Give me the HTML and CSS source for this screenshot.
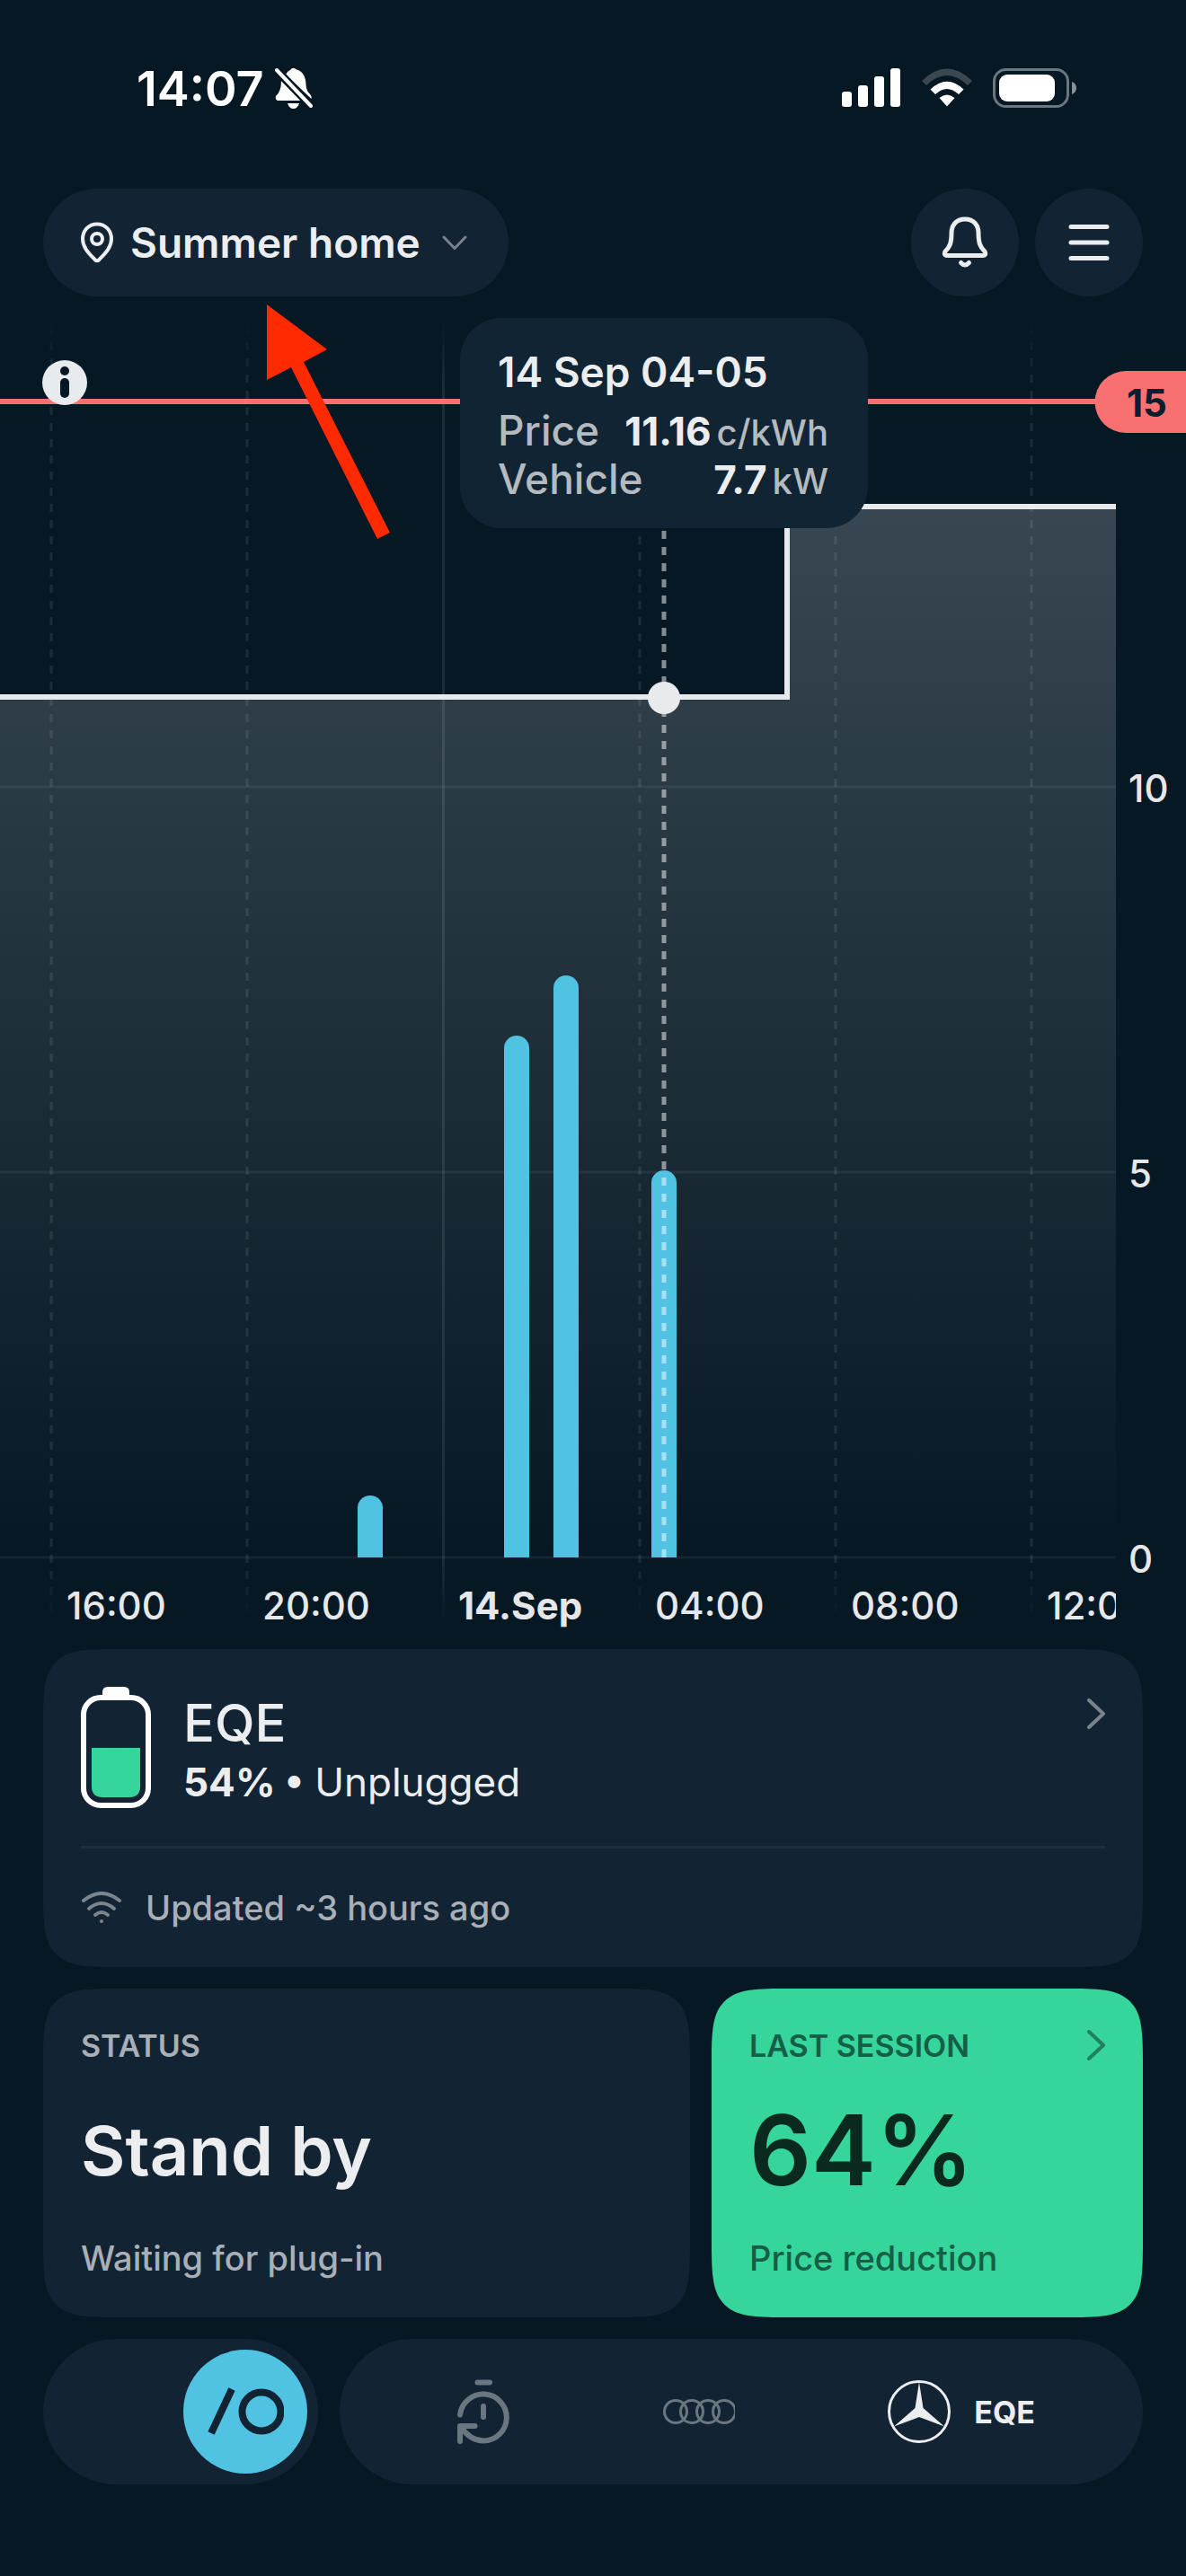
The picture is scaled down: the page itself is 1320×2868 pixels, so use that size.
FILE: index.html
```
<!DOCTYPE html>
<html lang="en">
<head>
  <meta charset="UTF-8" />
  <meta name="viewport" content="width=device-width, initial-scale=1" />
  <title>Summer home</title>
  <link rel="stylesheet" href="styles.css">
</head>
<body>

  <div class="status-bar">
    <div class="clock">
      <span>14:07</span>
      <svg width="42" height="48" viewBox="0 0 42 48" fill="#fff">
        <path d="M12 9 Q14 5 17 4 Q20 0 24 3.500 Q34 6 34.500 20 Q34.500 27 40 32 Q41 34 40.500 36 Z" />
        <path d="M7 16 L29 38 H3 Q0 37 1 33 Q7 28 7 16 Z" />
        <path d="M14 41 H27 Q25 47 20.500 47 Q16 47 14 41 Z" />
        <path d="M2 4 L40 44" stroke="#061824" stroke-width="9" />
        <path d="M2 4 L40 44" stroke="#fff" stroke-width="4" stroke-linecap="round" />
      </svg>
    </div>
    <div class="signals">
      <svg width="66" height="44" viewBox="0 0 66 44" fill="#fff">
        <rect x="0" y="26" width="11" height="17" rx="3" />
        <rect x="18" y="19" width="11" height="24" rx="3" />
        <rect x="36" y="9" width="11" height="34" rx="3" />
        <rect x="54" y="0" width="11" height="43" rx="3" />
      </svg>
      <svg width="58" height="44" viewBox="0 0 58 44" fill="#fff">
        <path d="M1 14 Q29 -13 57 14 L52 19 Q29 -3 6 19 Z" fill="#3b4852" />
        <path d="M10.500 23.500 Q29 6 47.500 23.500 L42 29 Q29 17 16 29 Z" />
        <path d="M20.500 33 Q29 26 37.500 33 L29 42.500 Z" />
      </svg>
      <svg width="93" height="44" viewBox="0 0 93 44">
        <rect x="1.500" y="1.500" width="82" height="41" rx="13" fill="none" stroke="#6c767e" stroke-width="3" />
        <rect x="7" y="7" width="62" height="30" rx="9" fill="#fff" />
        <path d="M88 15 Q93 17 93 22 Q93 27 88 29 Z" fill="#8a9299" />
      </svg>
    </div>
  </div>

  <header class="top-bar">
    <button class="location">
      <svg width="38" height="46" viewBox="0 0 38 46" fill="none" stroke="#ecedef" stroke-width="4" stroke-linejoin="round">
        <path d="M19 2.500 C10 2.500 3 9.500 3 19 C3 29 11 36 16.500 42 Q19 44.500 21.500 42 C27 36 35 29 35 19 C35 9.500 28 2.500 19 2.500 Z" />
        <circle cx="19" cy="19" r="6" />
      </svg>
      <span>Summer home</span>
      <svg width="28" height="17" viewBox="0 0 28 17" fill="none" stroke="#79838b" stroke-width="3" stroke-linecap="round" stroke-linejoin="round">
        <path d="M2 2 L14 14.500 L26 2" />
      </svg>
    </button>
    <button class="round-btn" aria-label="Notifications">
      <svg width="52" height="58" viewBox="0 0 52 58" fill="none" stroke="#ecedef" stroke-width="5" stroke-linecap="round" stroke-linejoin="round">
        <path d="M26 3 C16 3 11 10 11 18 C11 30 9 34 4 39 Q2 43 6 43.500 H46 Q50 43 48 39 C43 34 41 30 41 18 C41 10 36 3 26 3 Z" />
        <path d="M21.500 51.500 Q26 56.500 30.500 51.500" />
      </svg>
    </button>
    <button class="round-btn" aria-label="Menu">
      <svg width="46" height="42" viewBox="0 0 46 42" stroke="#ecedef" stroke-width="5" stroke-linecap="round">
        <path d="M3 3.500 H43 M3 21 H43 M3 38.500 H43" />
      </svg>
    </button>
  </header>

  <section class="chart">
    <svg class="plot" viewBox="0 0 1320 1482">
      <defs>
        <linearGradient id="area" gradientUnits="userSpaceOnUse" x1="0" y1="234" x2="0" y2="1404">
          <stop offset="0" stop-color="#e8ebee" stop-opacity="0.220" />
          <stop offset="1" stop-color="#e8ebee" stop-opacity="0" />
        </linearGradient>
        <linearGradient id="gridFade" gradientUnits="userSpaceOnUse" x1="0" y1="28" x2="0" y2="1478">
          <stop offset="0" stop-color="#fff" stop-opacity="0" />
          <stop offset="0.050" stop-color="#fff" stop-opacity="0.090" />
          <stop offset="0.950" stop-color="#fff" stop-opacity="0.090" />
          <stop offset="1" stop-color="#fff" stop-opacity="0" />
        </linearGradient>
        <clipPath id="plotArea"><rect x="0" y="0" width="1242" height="1482" /></clipPath>
      </defs>

      <!-- price area -->
      <path d="M0 446 H876 V234 H1242 V1404 H0 Z" fill="url(#area)" />

      <!-- grid -->
      <path class="grid-h" d="M0 546 H1242 M0 975 H1242 M0 1404 H1242" />
      <g fill="url(#gridFade)">
        <rect x="492" y="28" width="3" height="1450" />
      </g>
      <g stroke="url(#gridFade)" stroke-width="3" stroke-dasharray="9 9">
        <path d="M57 33 L57.010 1478" />
        <path d="M275 33 L275.010 1478" />
        <path d="M712 33 L712.010 1478" />
        <path d="M930 33 L930.010 1478" />
        <path d="M1148 33 L1148.010 1478" />
      </g>

      <!-- charging bars -->
      <g fill="#4fc3e1">
        <path d="M398 1404 V1349 a14 14 0 0 1 28 0 V1404 Z" />
        <path d="M561 1404 V837 a14 14 0 0 1 28 0 V1404 Z" />
        <path d="M616 1404 V770 a14 14 0 0 1 28 0 V1404 Z" />
        <path d="M725 1404 V987 a14 14 0 0 1 28 0 V1404 Z" />
      </g>

      <path class="limit" d="M0 117 H1230" />
      <path class="cursor" d="M739 243 V1404" />
      <path class="price" d="M0 446 H876 V234 H1242" />
      <circle cx="739" cy="447" r="18" fill="#e8ebee" />

      <!-- info marker -->
      <circle cx="72" cy="96" r="25" fill="#e8ebee" />
      <circle cx="72" cy="83" r="5" fill="#061824" />
      <rect x="67" y="91" width="10" height="22" rx="5" fill="#061824" />

      <!-- limit badge -->
      <path d="M1320 83 H1253 a34.500 34.500 0 0 0 0 69 H1320 Z" fill="#f87171" />
      <text class="limit-label" x="1254" y="134">15</text>

      <g class="axis">
        <text x="1256" y="563">10</text>
        <text x="1256" y="992">5</text>
        <text x="1256" y="1421">0</text>
      </g>
      <g class="axis" clip-path="url(#plotArea)">
        <text x="74" y="1473">16:00</text>
        <text x="292" y="1473">20:00</text>
        <text class="day" x="510" y="1473">14.Sep</text>
        <text x="729" y="1473">04:00</text>
        <text x="947" y="1473">08:00</text>
        <text x="1165" y="1473">12:00</text>
      </g>

      <path d="M297 9 L364 59 L338 73 L434 263 L420 270 L324 79 L297 93 Z" fill="#ff2a00" />
    </svg>

    <div class="tooltip">
      <div class="tooltip-title">14 Sep 04-05</div>
      <div class="tooltip-row">
        <span>Price</span>
        <span class="reading"><b>11.16</b><small>c/kWh</small></span>
      </div>
      <div class="tooltip-row">
        <span>Vehicle</span>
        <span class="reading"><b>7.7</b><small>kW</small></span>
      </div>
    </div>
  </section>

  <main class="cards">
    <a href="#" class="card vehicle">
      <div class="vehicle-top">
        <svg width="78" height="135" viewBox="0 0 78 135">
          <path d="M24 11 V6 Q24 0 30 0 H48 Q54 0 54 6 V11 Z" fill="#fff" />
          <rect x="3" y="12" width="72" height="120" rx="19" fill="none" stroke="#fff" stroke-width="6" />
          <path d="M12 68 H66 V111 Q66 123 54 123 H24 Q12 123 12 111 Z" fill="#36d59b" />
        </svg>
        <div class="vehicle-info">
          <div class="vehicle-name">EQE</div>
          <div class="vehicle-state"><b>54% •</b> Unplugged</div>
        </div>
        <svg class="chevron" width="20" height="34" viewBox="0 0 20 34">
          <path d="M2 2 L18 17 L2 32" />
        </svg>
      </div>
      <div class="updated">
        <svg width="46" height="36" viewBox="0 0 46 36" fill="none" stroke="#7b858d" stroke-width="4" stroke-linecap="round">
          <path d="M3 10 Q23 -6 43 10" />
          <path d="M9 19 Q23 7 37 19" />
          <path d="M16 26 Q23 20 30 26" />
          <circle cx="23" cy="33" r="2" fill="#7b858d" stroke="none" />
        </svg>
        <span>Updated ~3 hours ago</span>
      </div>
    </a>

    <div class="card-row">
      <div class="card status">
        <div class="card-label">STATUS</div>
        <div class="card-value">Stand by</div>
        <div class="card-note">Waiting for plug-in</div>
      </div>
      <a href="#" class="card session">
        <div class="card-label">
          <span>LAST SESSION</span>
          <svg class="chevron" width="20" height="34" viewBox="0 0 20 34">
            <path d="M2 2 L18 17 L2 32" />
          </svg>
        </div>
        <div class="card-value">64%</div>
        <div class="card-note">Price reduction</div>
      </a>
    </div>
  </main>

  <footer class="bottom-bar">
    <label class="toggle">
      <input type="checkbox" role="switch" aria-label="Smart charging" checked />
      <span class="knob">
        <svg width="86" height="56" viewBox="0 0 86 56" fill="none" stroke="#122333" stroke-width="8">
          <path d="M28 3 L5 52" />
          <circle cx="61" cy="28" r="21.500" />
        </svg>
      </span>
    </label>
    <nav class="tabs">
      <a href="#" aria-label="Schedule">
        <svg width="58" height="72" viewBox="0 0 58 72" fill="none" stroke="#6b7780" stroke-width="6" stroke-linecap="round" stroke-linejoin="round">
          <path d="M22.500 3.500 H36" />
          <path d="M3 39.500 A26 26 0 1 1 29 68.500 Q14 68 4 53" />
          <path d="M29 30 V42" />
          <path d="M19.500 52 H3 V69" />
        </svg>
      </a>
      <a href="#" aria-label="Audi">
        <svg width="80" height="30" viewBox="0 0 80 30" fill="none" stroke="#6b7780" stroke-width="3">
          <circle cx="14" cy="15" r="12.500" />
          <circle cx="32" cy="15" r="12.500" />
          <circle cx="50" cy="15" r="12.500" />
          <circle cx="68" cy="15" r="12.500" />
        </svg>
      </a>
      <a href="#" class="active">
        <svg width="70" height="70" viewBox="0 0 70 70">
          <circle cx="35" cy="35" r="33.500" fill="none" stroke="#ecedef" stroke-width="3" />
          <path d="M35 2 L39.500 31 L63 51.500 L35 41 L7 51.500 L30.500 31 Z" fill="#ecedef" />
        </svg>
        <span>EQE</span>
      </a>
    </nav>
  </footer>

</body>
</html>
```
FILE: styles.css
```
* { box-sizing: border-box; }

body {
  margin: 0;
  font-family: Inter, "Open Sans", sans-serif;
  font-size: 42px;
  font-weight: 500;
  background: #061824;
  color: #ecedef;
}

svg { display: block; flex: none; }

a {
  color: inherit;
  text-decoration: none;
}

button {
  border: none;
  background: #122333;
  color: inherit;
  font: inherit;
  cursor: pointer;
}

/* phone status bar */
.status-bar {
  display: flex;
  justify-content: space-between;
  align-items: center;
  height: 196px;
  padding: 0 122px 0 152px;
}

.clock {
  display: flex;
  align-items: center;
  gap: 12px;
  font-size: 54px;
  font-weight: 600;
  color: #fff;
}

.signals {
  display: flex;
  align-items: center;
  gap: 22px;
}

/* header */
.top-bar {
  display: flex;
  gap: 18px;
  padding: 14px 48px 0;
}

.location {
  display: flex;
  align-items: center;
  gap: 18px;
  height: 120px;
  margin-right: auto;
  padding: 0 46px 0 41px;
  border-radius: 60px;
  font-size: 46px;
  font-weight: 600;
}

.location svg:last-child { margin-left: 6px; }

.round-btn {
  display: flex;
  align-items: center;
  justify-content: center;
  width: 120px;
  height: 120px;
  padding: 0;
  border-radius: 50%;
}

/* chart */
.chart {
  position: relative;
  margin-bottom: 24px;
}

.plot {
  width: 100%;
  height: auto;
}

.grid-h {
  stroke: rgba(255, 255, 255, 0.06);
  stroke-width: 3;
}

.limit {
  stroke: #f87171;
  stroke-width: 6;
}

.cursor {
  stroke: rgba(255, 255, 255, 0.5);
  stroke-width: 5;
  stroke-dasharray: 9 9;
}

.price {
  fill: none;
  stroke: #e8ebee;
  stroke-width: 6;
}

.axis {
  fill: #e6e7e9;
  font-size: 42px;
}

.day { font-weight: 700; }

.limit-label {
  fill: #0b1e2d;
  font-size: 42px;
  font-weight: 700;
}

.tooltip {
  position: absolute;
  top: 24px;
  left: 512px;
  width: 454px;
  padding: 32px 44px 28px 42px;
  border-radius: 46px;
  background: #112433;
}

.tooltip-title {
  margin-bottom: 10px;
  line-height: 56px;
  font-size: 46px;
  font-weight: 600;
}

.tooltip-row {
  display: flex;
  justify-content: space-between;
  align-items: baseline;
  height: 54px;
  line-height: 54px;
  font-size: 46px;
  color: #b5babf;
}

.reading { font-size: 44px; }

.reading b {
  margin-right: 6px;
  font-weight: 700;
  color: #ecedef;
}

.reading small { font-size: 40px; }

/* cards */
.cards {
  display: flex;
  flex-direction: column;
  gap: 24px;
  padding: 0 48px;
}

.card {
  display: block;
  padding: 42px;
  border-radius: 60px;
  background: #122333;
}

@supports (corner-shape: squircle) {
  .card {
    border-radius: 90px;
    corner-shape: squircle;
  }
}

.chevron {
  fill: none;
  stroke: #79838b;
  stroke-width: 4;
  stroke-linecap: round;
  stroke-linejoin: round;
}

.vehicle-top {
  display: flex;
  padding-bottom: 37px;
  border-bottom: 3px solid #1d2e3c;
}

.vehicle-info {
  flex: 1;
  padding: 8px 0 0 36px;
}

.vehicle-name {
  line-height: 64px;
  font-size: 58px;
}

.vehicle-state {
  line-height: 68px;
  font-size: 44px;
  font-weight: 400;
}

.vehicle-state b { font-weight: 700; }

.vehicle-top .chevron { margin-top: 13px; }

.updated {
  display: flex;
  align-items: center;
  gap: 26px;
  padding: 42px 0 0;
  line-height: 48px;
  font-size: 38px;
  color: #a9afb6;
}

.card-row {
  display: grid;
  grid-template-columns: 3fr 2fr;
  gap: 24px;
}

.card-label {
  display: flex;
  justify-content: space-between;
  align-items: center;
  height: 42px;
  font-size: 34px;
  font-weight: 600;
  color: #a9afb6;
}

.card-value {
  margin: 8px 0;
  line-height: 176px;
  font-size: 76px;
  font-weight: 600;
}

.card-note {
  line-height: 48px;
  font-size: 38px;
  color: #a9afb6;
}

.session {
  background: #36d59b;
  color: #0a2a20;
}

.session .card-label,
.session .card-note { color: #165f47; }

.session .card-value { font-size: 108px; }

.session .chevron { stroke: #218060; }

/* bottom bar */
.bottom-bar {
  display: flex;
  gap: 24px;
  padding: 24px 48px 102px;
}

.toggle {
  display: flex;
  align-items: center;
  width: 306px;
  height: 162px;
  padding: 12px;
  border-radius: 81px;
  background: #122333;
}

.toggle input {
  appearance: none;
  width: 0;
  height: 0;
  margin: 0;
}

.knob {
  display: flex;
  align-items: center;
  justify-content: center;
  width: 138px;
  height: 138px;
  border-radius: 50%;
  background: #4fc3e1;
}

.toggle input:checked + .knob { margin-left: auto; }

.tabs {
  display: flex;
  flex: 1;
  align-items: center;
  justify-content: space-between;
  padding: 0 120px 0 131px;
  border-radius: 81px;
  background: #122333;
}

.active {
  display: flex;
  align-items: center;
  gap: 26px;
  font-size: 34px;
  font-weight: 700;
}
```
